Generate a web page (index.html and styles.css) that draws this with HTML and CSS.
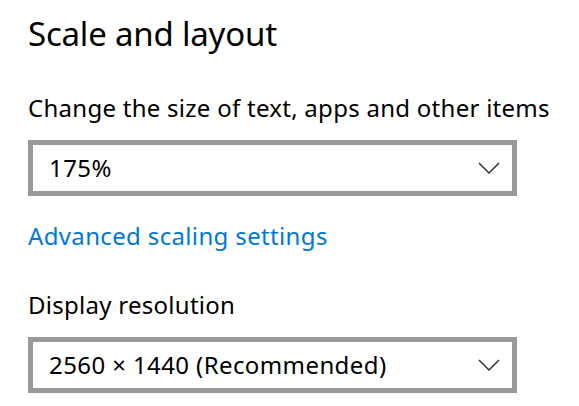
FILE: index.html
```html
<!DOCTYPE html>
<html lang="en">
<head>
<meta charset="utf-8">
<title>Scale and layout</title>
<link rel="stylesheet" href="styles.css">
</head>
<body>
<main class="panel">
  <h1 class="title">Scale and layout</h1>
  <p class="label label-scale">Change the size of text, apps and other items</p>
  <div class="select select-scale">
    <span class="select-value">175%</span>
    <svg class="chevron" width="22" height="12" viewBox="0 0 22 12" aria-hidden="true">
      <path d="M1 1 L11 11 L21 1" fill="none" stroke="#333" stroke-width="1.5"/>
    </svg>
  </div>
  <a class="link" href="#">Advanced scaling settings</a>
  <p class="label label-res">Display resolution</p>
  <div class="select select-res">
    <span class="select-value">2560 × 1440 (Recommended)</span>
    <svg class="chevron" width="22" height="12" viewBox="0 0 22 12" aria-hidden="true">
      <path d="M1 1 L11 11 L21 1" fill="none" stroke="#333" stroke-width="1.5"/>
    </svg>
  </div>
</main>
</body>
</html>
```
FILE: styles.css
```css
html, body {
  margin: 0;
  padding: 0;
  background: #ffffff;
}
body {
  font-family: "Noto Sans", "Open Sans", sans-serif;
  color: #000000;
}
.panel {
  display: flex;
  flex-direction: column;
  align-items: flex-start;
  padding: 14px 0 0 28px;
}
.title {
  margin: 0;
  font-size: 33px;
  font-weight: 400;
  line-height: 40px;
  letter-spacing: -0.2px;
}
.label {
  margin: 0;
  font-size: 24px;
  line-height: 30px;
  letter-spacing: 0.27px;
}
.label-scale {
  margin-top: 39px;
}
.label-res {
  margin-top: 39px;
}
.select {
  box-sizing: border-box;
  width: 489px;
  height: 56px;
  border: 5px solid #999999;
  display: flex;
  align-items: center;
  justify-content: space-between;
  padding: 0 12px 0 16px;
}
.select-scale {
  margin-top: 17px;
}
.select-res {
  margin-top: 17px;
}
.select-value {
  font-size: 24px;
  line-height: 30px;
  letter-spacing: 0.4px;
}
.chevron {
  display: block;
}
.link {
  margin-top: 25px;
  font-size: 24px;
  line-height: 30px;
  letter-spacing: 0.35px;
  color: #0078d7;
  text-decoration: none;
}
```
